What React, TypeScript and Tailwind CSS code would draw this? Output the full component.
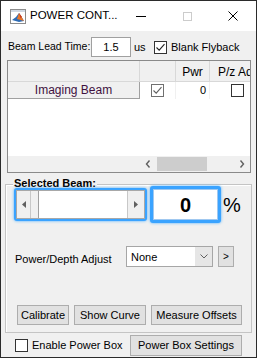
import React from 'react';

function CheckBox({ checked, muted }: { checked?: boolean; muted?: boolean }) {
  return (
    <div
      className={`w-[13px] h-[13px] bg-white border flex items-center justify-center ${
        muted ? 'border-[#707070]' : 'border-[#333333]'
      }`}
    >
      {checked && (
        <svg width="11" height="11" viewBox="0 0 11 11">
          <path d="M1.5 5.5 L4.2 8.2 L9.5 2.2" fill="none" stroke={muted ? '#606060' : '#222'} strokeWidth="1.1" />
        </svg>
      )}
    </div>
  );
}

function Button({ label, className }: { label: string; className: string }) {
  return (
    <div className={`h-[20px] bg-[#e1e1e1] border border-[#adadad] flex items-center justify-center text-[11px] text-black ${className}`}>
      {label}
    </div>
  );
}

function MatlabIcon() {
  return (
    <svg width="16" height="15" viewBox="0 0 16 15">
      <rect x="0.5" y="0.5" width="15" height="14" fill="#fff" stroke="#8c8c8c" />
      <rect x="1" y="1" width="14" height="2" fill="#cfd8e3" />
      <path d="M2 11 L6 8 L9 4 L11 7 L14 12 L9 13 Z" fill="#2d6cb5" />
      <path d="M7 10 L9 4 L11 7 L14 12 Z" fill="#e8762b" />
      <path d="M9 4 L10.5 9 L12 8 Z" fill="#c8391e" />
    </svg>
  );
}

export default function App() {
  return (
    <div className="w-[257px] h-[358px] border border-[#2b2b2b] bg-[#f0f0f0] flex flex-col font-['Liberation_Sans',Arial,sans-serif] text-[11px] text-black overflow-hidden">
      {/* title bar */}
      <div className="h-[30px] bg-white flex items-center shrink-0">
        <div className="ml-[9px] mt-[1px]">
          <MatlabIcon />
        </div>
        <div className="ml-[4px] text-[11.5px] text-black">POWER CONT...</div>
        <div className="ml-auto flex h-full">
          <div className="w-[46px] flex items-center justify-center">
            <div className="w-[10px] h-[1px] bg-black" />
          </div>
          <div className="w-[46px] flex items-center justify-center">
            <div className="w-[9px] h-[9px] border border-[#cccccc]" />
          </div>
          <div className="w-[46px] flex items-center justify-center">
            <svg width="10" height="10" viewBox="0 0 10 10">
              <path d="M0.5 0.5 L9.5 9.5 M9.5 0.5 L0.5 9.5" stroke="#000" strokeWidth="1" />
            </svg>
          </div>
        </div>
      </div>

      {/* beam lead time row */}
      <div className="mt-[6px] h-[20px] flex items-center pl-[7px]">
        <span className="w-[83px] whitespace-nowrap text-[10.5px]">Beam Lead Time:</span>
        <div className="w-[40px] h-[20px] bg-white border border-[#a0a0a0] flex items-center justify-center">1.5</div>
        <span className="ml-[3px] w-[20px]">us</span>
        <CheckBox checked />
        <span className="ml-[4px] whitespace-nowrap">Blank Flyback</span>
      </div>

      {/* table */}
      <div className="mt-[3px] ml-[6px] w-[244px] h-[113px] border border-[#8a8a8a] bg-white flex flex-col overflow-hidden">
        <div className="h-[21px] flex bg-[#f0f0f0] border-b border-[#d8d8d8] shrink-0">
          <div className="w-[132px] border-r border-[#d8d8d8]" />
          <div className="w-[36px] border-r border-[#d8d8d8]" />
          <div className="w-[34px] border-r border-[#d8d8d8] flex items-center justify-center pt-[1px] text-[12px]">Pwr</div>
          <div className="flex-1 flex items-center pl-[8px] pt-[1px] whitespace-nowrap overflow-hidden text-[12px]">P/z Adjust</div>
        </div>
        <div className="h-[17px] flex shrink-0">
          <div className="w-[132px] bg-[#f0f0f0] border-r border-b border-[#a0a0a0] flex items-center justify-center text-[12px] text-[#3f1040]">
            Imaging Beam
          </div>
          <div className="w-[36px] border-r border-[#f0f0f0] flex items-center justify-center">
            <CheckBox checked muted />
          </div>
          <div className="w-[34px] border-r border-[#f0f0f0] flex items-center justify-end pr-[3px] text-[11px]">0</div>
          <div className="flex-1 flex items-center pl-[21px]">
            <CheckBox />
          </div>
        </div>
        <div className="flex-1" />
        <div className="h-[16px] bg-[#f0f0f0] flex shrink-0">
          <div className="w-[131px]" />
          <div className="w-[18px] flex items-center justify-center">
            <svg width="6" height="8" viewBox="0 0 6 8">
              <path d="M4.5 0.5 L1.5 4 L4.5 7.5" fill="none" stroke="#606060" strokeWidth="1.4" />
            </svg>
          </div>
          <div className="w-[50px] bg-[#cdcdcd] my-[1px]" />
          <div className="flex-1" />
          <div className="w-[17px] flex items-center justify-center">
            <svg width="6" height="8" viewBox="0 0 6 8">
              <path d="M1.5 0.5 L4.5 4 L1.5 7.5" fill="none" stroke="#606060" strokeWidth="1.4" />
            </svg>
          </div>
        </div>
      </div>

      {/* selected beam panel */}
      <div className="mt-[11px] ml-[4px] w-[247px] h-[149px] border border-[#c4c4c4] shadow-[inset_1px_1px_0_#ffffff] flex flex-col shrink-0">
        <div className="-mt-[8px] ml-[7px] w-fit px-[1px] bg-[#f0f0f0] leading-[13px] font-bold text-[11px]">Selected Beam:</div>
        <div className="-mt-[4px] ml-[8px] h-[37px] flex items-center">
          <div className="w-[133px] h-[33px] p-[2px] rounded-[3px] bg-[#3aa3ff] shadow-[0_0_3px_#4aaeff]">
            <div className="w-full h-full bg-white border border-[#a8a8a8] flex">
              <div className="w-[14px] bg-[#f0f0f0] border-r border-[#c8c8c8] flex items-center justify-center">
                <svg width="4" height="7" viewBox="0 0 4 7"><path d="M4 0 L0 3.5 L4 7 Z" fill="#606060" /></svg>
              </div>
              <div className="w-[8px] bg-[#f0f0f0] border-r border-[#a0a0a0]" />
              <div className="flex-1" />
              <div className="w-[17px] bg-[#f0f0f0] border-l border-[#c8c8c8] flex items-center justify-center">
                <svg width="4" height="7" viewBox="0 0 4 7"><path d="M0 0 L4 3.5 L0 7 Z" fill="#606060" /></svg>
              </div>
            </div>
          </div>
          <div className="ml-[3px] w-[71px] h-[37px] p-[3px] rounded-[3px] bg-[#3aa3ff] shadow-[0_0_3px_#4aaeff]">
            <div className="w-full h-full bg-white border border-[#a0c8f0] flex items-center justify-center text-[20px] font-bold">0</div>
          </div>
          <span className="ml-[2px] text-[20px] leading-none">%</span>
        </div>
        <div className="mt-[23px] ml-[9px] h-[21px] flex items-center">
          <span className="w-[111px] pt-[6px] whitespace-nowrap">Power/Depth Adjust</span>
          <div className="w-[87px] h-[21px] bg-white border border-[#a6a6a6] flex">
            <div className="flex-1 pl-[4px] pt-[2px]">None</div>
            <div className="w-[17px] bg-[#e6e6e6] flex items-center justify-center">
              <svg width="8" height="5" viewBox="0 0 8 5"><path d="M0.5 0.5 L4 4 L7.5 0.5" fill="none" stroke="#606060" strokeWidth="1" /></svg>
            </div>
          </div>
          <div className="ml-[5px] w-[16px] h-[21px] bg-[#e1e1e1] border border-[#adadad] flex items-center justify-center text-[10px]">&gt;</div>
        </div>
        <div className="mt-[38px] ml-[11px] flex">
          <Button label="Calibrate" className="w-[52px]" />
          <Button label="Show Curve" className="ml-[5px] w-[72px]" />
          <Button label="Measure Offsets" className="ml-[5px] w-[91px]" />
        </div>
      </div>

      {/* bottom row */}
      <div className="mt-[2px] h-[21px] flex items-center">
        <div className="ml-[14px]">
          <CheckBox />
        </div>
        <span className="ml-[4px] whitespace-nowrap">Enable Power Box</span>
        <Button label="Power Box Settings" className="ml-auto mr-[14px] w-[112px] h-[21px]" />
      </div>
    </div>
  );
}
